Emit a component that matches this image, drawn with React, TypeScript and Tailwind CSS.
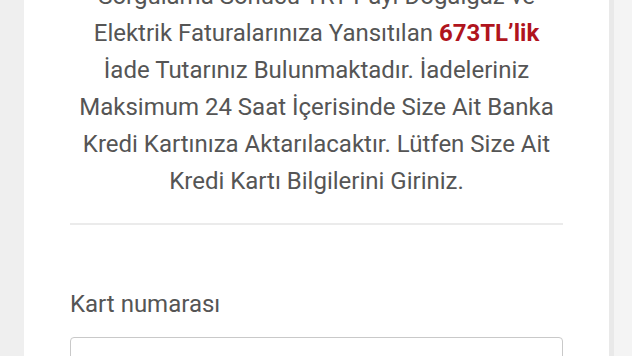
export default function App() {
  return (
    <div className="flex h-[356px] w-[632px] overflow-hidden bg-[#efefef] pl-[24px] font-['Roboto',sans-serif]">
      <div className="w-[585px] shrink-0 bg-white px-[46px]">
        <p className="mt-[-22px] whitespace-nowrap text-center text-[24px] leading-[37px] text-[#555555]">
          Sorgulama Sonucu TRT Payı Doğalgaz ve
          <br />
          Elektrik Faturalarınıza Yansıtılan <span className="font-bold text-[#b0141d]">673TL’lik</span>
          <br />
          İade Tutarınız Bulunmaktadır. İadeleriniz
          <br />
          Maksimum 24 Saat İçerisinde Size Ait Banka
          <br />
          Kredi Kartınıza Aktarılacaktır. Lütfen Size Ait
          <br />
          Kredi Kartı Bilgilerini Giriniz.
        </p>
        <div className="mt-[23px] h-[2px] bg-[#ebebeb]" />
        <label className="mt-[65px] block text-[24px] leading-[28px] text-[#555555]">Kart numarası</label>
        <div className="mt-[19px] h-[48px] rounded-[4px] border border-[#c9c9c9] px-[14px] pt-[14px] text-[18px] text-[#c4c4c4]">
          Kart numarası
        </div>
      </div>
      <div className="w-[5px] shrink-0 bg-[#e9e9e9]" />
      <div className="flex-1 bg-[#f4f4f4]" />
    </div>
  );
}
